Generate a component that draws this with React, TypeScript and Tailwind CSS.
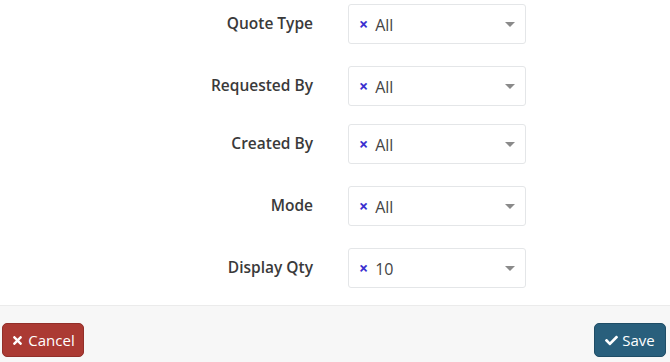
import React from "react";
import { FaTimes, FaCheck } from "react-icons/fa";

const filters = [
  { label: "Quote Type", value: "All", gap: "" },
  { label: "Requested By", value: "All", gap: "mt-[22px]" },
  { label: "Created By", value: "All", gap: "mt-[18px]" },
  { label: "Mode", value: "All", gap: "mt-[22px]" },
  { label: "Display Qty", value: "10", gap: "mt-[22px]" },
];

function FilterRow({ label, value, gap }: { label: string; value: string; gap: string }) {
  return (
    <div className={`flex items-center ${gap}`}>
      <label className="w-[313px] pb-[3px] text-right text-[15.5px] leading-[22px] font-semibold text-[#3a3a3a]">{label}</label>
      <div className="ml-[35px] flex h-[40px] w-[178px] items-center rounded-[3px] border border-[#e4e6e8] bg-white pl-[10px] pr-[10px]">
        <span className="mr-[7px] text-[16px] leading-none font-bold text-[#3b2fd0]">×</span>
        <span className="flex-1 pt-[2px] text-[16px] leading-[22px] text-[#444]">{value}</span>
        <span className="h-0 w-0 border-x-[5px] border-t-[5px] border-x-transparent border-t-[#8a8a8a]" />
      </div>
    </div>
  );
}

export default function App() {
  return (
    <div className="flex h-[362px] w-[670px] flex-col overflow-hidden bg-white font-['Open_Sans',sans-serif]">
      <div className="flex h-[305px] shrink-0 flex-col pt-[4px]">
        {filters.map((f) => (
          <FilterRow key={f.label} {...f} />
        ))}
      </div>
      <div className="flex h-[57px] shrink-0 items-start justify-between border-t border-[#ebebeb] bg-[#f7f7f7] pl-[2px] pr-[4px] pt-[17px]">
        <button className="flex h-[34px] w-[82px] items-center justify-center gap-[4px] rounded-[5px] border border-[#922f29] bg-[#ab3a33] text-[15px] text-white">
          <FaTimes className="text-[13px]" />
          Cancel
        </button>
        <button className="flex h-[34px] w-[72px] items-center justify-center gap-[4px] rounded-[5px] border border-[#1f4d66] bg-[#295f7c] text-[15px] text-white">
          <FaCheck className="text-[13px]" />
          Save
        </button>
      </div>
    </div>
  );
}
